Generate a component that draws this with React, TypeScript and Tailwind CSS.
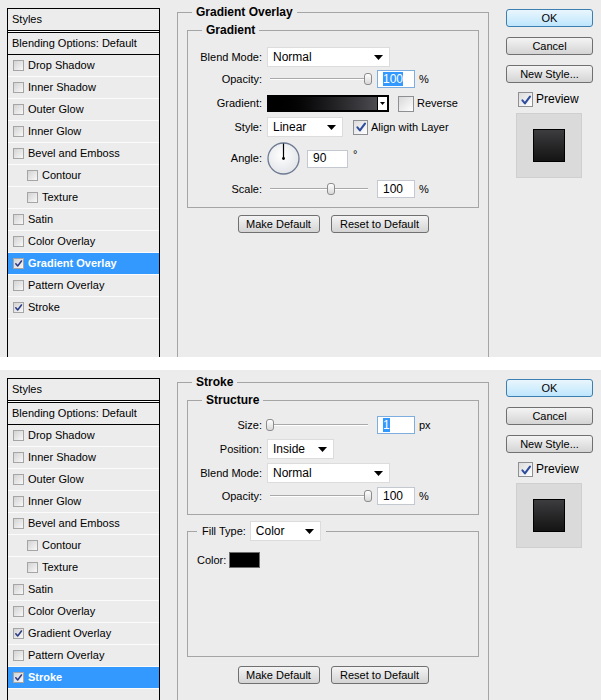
import React from 'react';

const ui = "font-['Liberation_Sans',Arial,sans-serif] text-[11px] leading-[13px] text-black";

type Effect = { label: string; indent?: boolean };

const EFFECTS: Effect[] = [
    { label: 'Drop Shadow' },
    { label: 'Inner Shadow' },
    { label: 'Outer Glow' },
    { label: 'Inner Glow' },
    { label: 'Bevel and Emboss' },
    { label: 'Contour', indent: true },
    { label: 'Texture', indent: true },
    { label: 'Satin' },
    { label: 'Color Overlay' },
    { label: 'Gradient Overlay' },
    { label: 'Pattern Overlay' },
    { label: 'Stroke' },
];

const Tick = ({ className }: { className?: string }) => (
    <svg viewBox="0 0 10 10" className={className}>
        <path d="M2 5.3 L4.1 7.8 L8.3 2.2" fill="none" stroke="currentColor" strokeWidth="1.7" strokeLinecap="round" strokeLinejoin="round" />
    </svg>
);

const Caret = ({ small }: { small?: boolean }) => (
    <svg width={small ? 5 : 9} height={small ? 3 : 5} viewBox="0 0 9 5" className="shrink-0">
        <path d="M0 0 H9 L4.5 5 Z" fill="#000" />
    </svg>
);

// little checkbox used in the effects list
const ListBox = ({ checked }: { checked?: boolean }) => (
    <span className="flex h-[11px] w-[11px] shrink-0 items-center justify-center border border-[#a5a5a5] bg-gradient-to-br from-[#d3d3d3] to-[#f8f8f8]">
        {checked && <Tick className="h-[9px] w-[9px] text-[#2b3a86]" />}
    </span>
);

const CheckBox = ({ checked }: { checked?: boolean }) => (
    <span className="flex h-[15px] w-[15px] shrink-0 items-center justify-center border border-[#8e8f92] bg-gradient-to-br from-[#dcdcdc] to-white">
        {checked && <Tick className="h-[12px] w-[12px] text-[#2d4c9e]" />}
    </span>
);

const Button = ({ children, w, primary, className }: { children: React.ReactNode; w: string; primary?: boolean; className?: string }) => (
    <div
        className={`flex h-[18px] shrink-0 items-center justify-center rounded-[3px] border ${
            primary
                ? 'border-[#3c7fb1] bg-gradient-to-b from-[#eaf6fd] to-[#bee6fd]'
                : 'border-[#707070] bg-gradient-to-b from-[#f4f4f4] to-[#d4d4d4]'
        } ${w} ${className ?? ''}`}
    >
        {children}
    </div>
);

const Select = ({ value, w }: { value: string; w: string }) => (
    <div className={`flex h-[20px] shrink-0 items-center justify-between border border-[#dcdcdc] bg-white pl-[5px] pr-[6px] text-[12px] ${w}`}>
        <span>{value}</span>
        <Caret />
    </div>
);

const NumField = ({ value, selected, w = 'w-[38px]' }: { value: string; selected?: boolean; w?: string }) => (
    <div className={`flex h-[18px] shrink-0 items-center border bg-white pl-[5px] text-[12px] ${selected ? 'border-[#7eaee0]' : 'border-[#c4c9d1]'} ${w}`}>
        {selected ? <span className="bg-[#3399ff] leading-[14px] text-white">{value}</span> : value}
    </div>
);

const Slider = ({ pos }: { pos: number }) => (
    <div className="relative h-full w-[105px] shrink-0">
        <div className="absolute left-[3px] top-[8px] h-[2px] w-[98px] border-t border-[#a9a9a9] bg-white" />
        <div
            className="absolute top-[3px] h-[12px] w-[8px] -translate-x-1/2 rounded-[3px] border border-[#8c8c8c] bg-gradient-to-b from-white to-[#d8d8d8]"
            style={{ left: 3 + pos * 98 }}
        />
    </div>
);

const AngleDial = () => (
    <svg width="33" height="33" viewBox="0 0 33 33" className="shrink-0">
        <defs>
            <radialGradient id="dialFill" cx="45%" cy="40%" r="65%">
                <stop offset="0" stopColor="#ffffff" />
                <stop offset="1" stopColor="#e1e3e7" />
            </radialGradient>
        </defs>
        <circle cx="16.5" cy="16.5" r="15.5" fill="url(#dialFill)" stroke="#6e7b92" strokeWidth="1.3" />
        <line x1="16.5" y1="16.5" x2="16.5" y2="1.5" stroke="#000" strokeWidth="1.2" />
        <circle cx="16.5" cy="16.5" r="1.4" fill="#000" />
    </svg>
);

const GroupBox = ({ title, className, children }: { title: React.ReactNode; className?: string; children: React.ReactNode }) => (
    <fieldset className={`border border-[#a5a5a5] ${className ?? ''}`}>
        <legend className="ml-[14px] px-[4px] text-[12px] font-bold leading-[14px]">{title}</legend>
        {children}
    </fieldset>
);

const Row = ({ label, className, children }: { label: string; className: string; children: React.ReactNode }) => (
    <div className={`flex items-center ${className}`}>
        <span className="w-[74px] shrink-0 text-right">{label}</span>
        <div className="ml-[5px] flex h-full items-center">{children}</div>
    </div>
);

const StylesList = ({ active, checked }: { active: string; checked: string[] }) => (
    <div className="ml-[7px] mt-[8px] h-[400px] w-[153px] shrink-0 border border-black bg-[#ececec]">
        <div className="flex h-[22px] items-center border-b border-black pl-[4px]">Styles</div>
        <div className="h-px bg-white" />
        <div className="flex h-[23px] items-center border-y border-black pl-[4px]">Blending Options: Default</div>
        {EFFECTS.map((fx) => {
            const on = fx.label === active;
            return (
                <div
                    key={fx.label}
                    className={`flex h-[22px] items-center border-b border-[#fbfbfb] ${fx.indent ? 'pl-[19px]' : 'pl-[5px]'} ${
                        on ? 'bg-[#3399ff] font-bold text-white' : ''
                    }`}
                >
                    <ListBox checked={checked.includes(fx.label)} />
                    <span className="ml-[4px]">{fx.label}</span>
                </div>
            );
        })}
    </div>
);

const SideButtons = () => (
    <div className="ml-[17px] flex w-[87px] shrink-0 flex-col pt-[9px]">
        <Button primary w="w-full">OK</Button>
        <Button w="w-full" className="mt-[10px]">Cancel</Button>
        <Button w="w-full" className="mt-[10px]">New Style...</Button>
        <div className="mt-[9px] flex h-[15px] items-center pl-[12px]">
            <CheckBox checked />
            <span className="ml-[3px] text-[12px]">Preview</span>
        </div>
        <div className="ml-[10px] mt-[6px] flex h-[65px] w-[66px] items-center justify-center border border-[#cfcfcf] bg-[#dadada]">
            <div className="h-[33px] w-[32px] border border-black bg-gradient-to-b from-[#3d3d40] to-[#141414]" />
        </div>
    </div>
);

const DefaultButtons = ({ className }: { className: string }) => (
    <div className={`flex justify-center gap-[11px] ${className}`}>
        <Button w="w-[82px]">Make Default</Button>
        <Button w="w-[98px]">Reset to Default</Button>
    </div>
);

const GradientOverlayPanel = () => (
    <div className="flex h-[357px] overflow-hidden bg-[#ececec]">
        <StylesList active="Gradient Overlay" checked={['Gradient Overlay', 'Stroke']} />
        <div className="ml-[17px] shrink-0 pt-[5px]">
            <GroupBox title="Gradient Overlay" className="h-[420px] w-[312px]">
                <div className="px-[9px]">
                    <GroupBox title="Gradient" className="mt-[4px]">
                        <div className="flex flex-col pb-[9px] pt-[10px]">
                            <Row label="Blend Mode:" className="h-[20px]">
                                <Select value="Normal" w="w-[123px]" />
                            </Row>
                            <Row label="Opacity:" className="mt-[3px] h-[18px]">
                                <Slider pos={1} />
                                <div className="ml-[5px]"><NumField value="100" selected /></div>
                                <span className="ml-[4px]">%</span>
                            </Row>
                            <Row label="Gradient:" className="mt-[7px] h-[17px]">
                                <div className="flex h-[17px] w-[122px] border-2 border-black">
                                    <div className="flex-1 border-r border-black bg-gradient-to-r from-black to-[#4c4c51]" />
                                    <div className="flex w-[9px] items-center justify-center bg-white">
                                        <Caret small />
                                    </div>
                                </div>
                                <span className="ml-[9px] h-[16px] w-[16px] border border-[#8e8f92] bg-gradient-to-br from-[#d8d8d8] to-white" />
                                <span className="ml-[3px]">Reverse</span>
                            </Row>
                            <Row label="Style:" className="mt-[5px] h-[20px]">
                                <Select value="Linear" w="w-[76px]" />
                                <div className="ml-[10px]"><CheckBox checked /></div>
                                <span className="ml-[3px]">Align with Layer</span>
                            </Row>
                            <Row label="Angle:" className="mt-[5px] h-[33px]">
                                <AngleDial />
                                <div className="ml-[7px]"><NumField value="90" w="w-[41px]" /></div>
                                <span className="mb-[8px] ml-[5px]">°</span>
                            </Row>
                            <Row label="Scale:" className="mt-[5px] h-[18px]">
                                <Slider pos={0.62} />
                                <div className="ml-[5px]"><NumField value="100" /></div>
                                <span className="ml-[4px]">%</span>
                            </Row>
                        </div>
                    </GroupBox>
                    <DefaultButtons className="mt-[7px]" />
                </div>
            </GroupBox>
        </div>
        <SideButtons />
    </div>
);

const StrokePanel = () => (
    <div className="flex h-[330px] overflow-hidden bg-[#ececec]">
        <StylesList active="Stroke" checked={['Gradient Overlay', 'Stroke']} />
        <div className="ml-[17px] shrink-0 pt-[5px]">
            <GroupBox title="Stroke" className="h-[400px] w-[312px]">
                <div className="px-[9px]">
                    <GroupBox title="Structure" className="mt-[4px]">
                        <div className="flex flex-col pb-[9px] pt-[9px]">
                            <Row label="Size:" className="h-[18px]">
                                <Slider pos={0} />
                                <div className="ml-[5px]"><NumField value="1" selected /></div>
                                <span className="ml-[4px]">px</span>
                            </Row>
                            <Row label="Position:" className="mt-[5px] h-[20px]">
                                <Select value="Inside" w="w-[67px]" />
                            </Row>
                            <Row label="Blend Mode:" className="mt-[4px] h-[20px]">
                                <Select value="Normal" w="w-[123px]" />
                            </Row>
                            <Row label="Opacity:" className="mt-[4px] h-[18px]">
                                <Slider pos={1} />
                                <div className="ml-[5px]"><NumField value="100" /></div>
                                <span className="ml-[4px]">%</span>
                            </Row>
                        </div>
                    </GroupBox>
                    <fieldset className="mt-[6px] h-[136px] border border-[#a5a5a5]">
                        <legend className="ml-[9px] px-[5px]">
                            <div className="flex items-center">
                                <span>Fill Type:</span>
                                <div className="ml-[4px]"><Select value="Color" w="w-[71px]" /></div>
                            </div>
                        </legend>
                        <div className="flex items-center pl-[9px] pt-[11px]">
                            <span>Color:</span>
                            <span className="ml-[3px] h-[16px] w-[31px] border border-[#6f6f6f] bg-black" />
                        </div>
                    </fieldset>
                    <DefaultButtons className="mt-[9px]" />
                </div>
            </GroupBox>
        </div>
        <SideButtons />
    </div>
);

export default function App() {
    return (
        <div className={`h-[700px] w-[601px] overflow-hidden bg-white ${ui}`}>
            <GradientOverlayPanel />
            <div className="h-[13px]" />
            <StrokePanel />
        </div>
    );
}
